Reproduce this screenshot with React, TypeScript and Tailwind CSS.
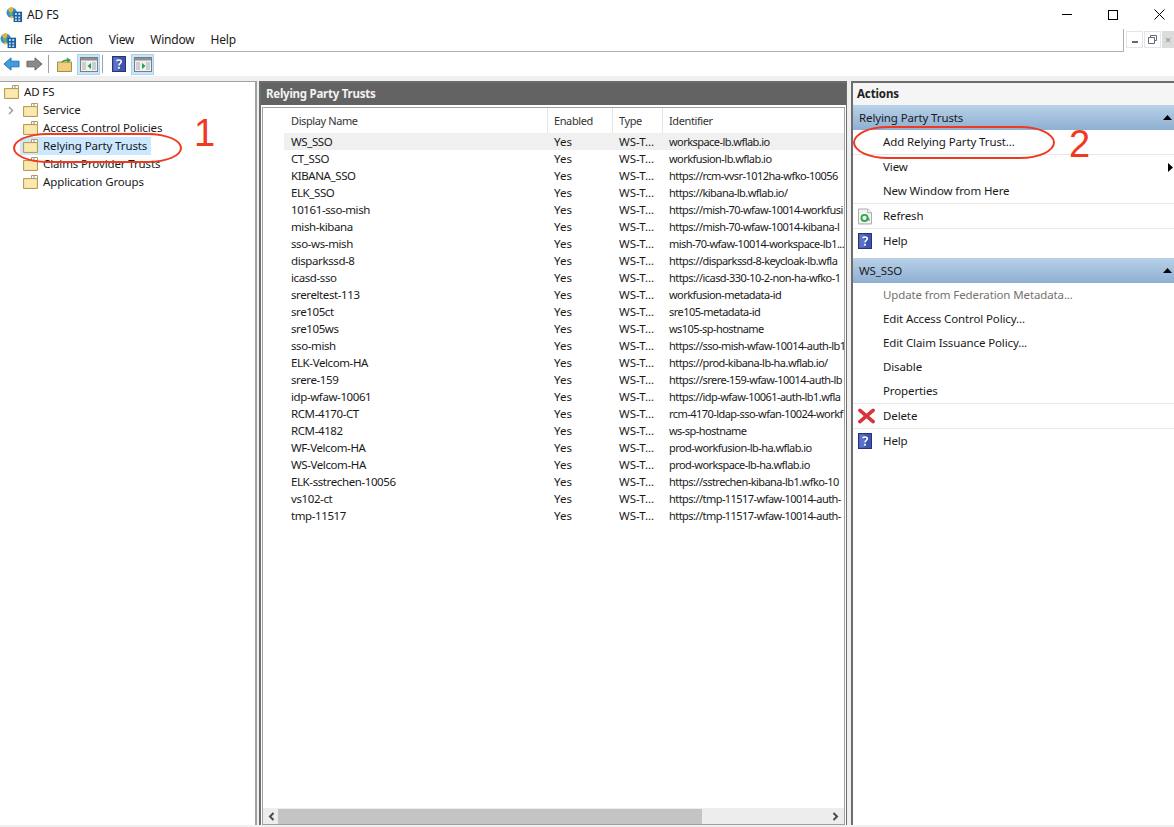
import type { ReactNode } from "react";

// identifiers are written as far as the column shows them
const rows = [
  ["WS_SSO", "workspace-lb.wflab.io"],
  ["CT_SSO", "workfusion-lb.wflab.io"],
  ["KIBANA_SSO", "https://rcm-vvsr-1012ha-wfko-10056"],
  ["ELK_SSO", "https://kibana-lb.wflab.io/"],
  ["10161-sso-mish", "https://mish-70-wfaw-10014-workfusi"],
  ["mish-kibana", "https://mish-70-wfaw-10014-kibana-l"],
  ["sso-ws-mish", "mish-70-wfaw-10014-workspace-lb1..."],
  ["disparkssd-8", "https://disparkssd-8-keycloak-lb.wfla"],
  ["icasd-sso", "https://icasd-330-10-2-non-ha-wfko-1"],
  ["srereltest-113", "workfusion-metadata-id"],
  ["sre105ct", "sre105-metadata-id"],
  ["sre105ws", "ws105-sp-hostname"],
  ["sso-mish", "https://sso-mish-wfaw-10014-auth-lb1"],
  ["ELK-Velcom-HA", "https://prod-kibana-lb-ha.wflab.io/"],
  ["srere-159", "https://srere-159-wfaw-10014-auth-lb"],
  ["idp-wfaw-10061", "https://idp-wfaw-10061-auth-lb1.wfla"],
  ["RCM-4170-CT", "rcm-4170-ldap-sso-wfan-10024-workf"],
  ["RCM-4182", "ws-sp-hostname"],
  ["WF-Velcom-HA", "prod-workfusion-lb-ha.wflab.io"],
  ["WS-Velcom-HA", "prod-workspace-lb-ha.wflab.io"],
  ["ELK-sstrechen-10056", "https://sstrechen-kibana-lb1.wfko-10"],
  ["vs102-ct", "https://tmp-11517-wfaw-10014-auth-"],
  ["tmp-11517", "https://tmp-11517-wfaw-10014-auth-"],
];

function Folder() {
  return (
    <svg width="15" height="14" viewBox="0 0 15 14" className="shrink-0">
      <path d="M.5 3.500h14v10H.5z" fill="#f3d887" stroke="#b79d5c" />
      <path d="M1.500 12.500V4.500h12v8z" fill="#f9e8b0" />
      <path d="M8.500 .500h6v3h-6z" fill="#fff" stroke="#b79d5c" />
      <path d="M10 1.500h2v1h-2z" fill="#5aa2d8" />
    </svg>
  );
}

function AppIcon() {
  return (
    <svg width="17" height="17" viewBox="0 0 18 18" className="shrink-0">
      <circle cx="6" cy="7" r="5.500" fill="#2f8fc9" />
      <path d="M2 4l3-3 3 1-1 4-3 1zM5 10l3 1-1 2H4z" fill="#e8b13c" />
      <path d="M3 7l3-1 1 3-3 1z" fill="#6fb54a" />
      <path d="M8 6h9v11H8z" fill="#1f5f9e" />
      <path d="M9.500 7.500h2v2h-2zM13 7.500h2v2h-2zM9.500 11h2v2h-2zM13 11h2v2h-2zM9.500 14h2v2h-2zM13 14h2v2h-2z" fill="#b9dcf3" />
    </svg>
  );
}

function HelpIcon() {
  return (
    <svg width="14" height="16" viewBox="0 0 14 16" className="shrink-0">
      <rect x="0.500" y="0.500" width="13" height="15" fill="#3f55ad" stroke="#27347c" />
      <rect x="1.500" y="1.500" width="5" height="13" fill="#5c74c8" />
      <path d="M4.700 5.200C5 3.600 9.300 3.300 9.300 5.600c0 1.800-2.300 1.800-2.300 3.900" fill="none" stroke="#fff" strokeWidth="1.600" />
      <rect x="6.100" y="10.800" width="1.800" height="1.900" fill="#fff" />
    </svg>
  );
}

function RefreshIcon() {
  return (
    <svg width="14" height="17" viewBox="0 0 15 17" className="shrink-0">
      <path d="M.5.500h10l4 4v12H.5z" fill="#f3f3f3" stroke="#a5a5a5" />
      <path d="M10.500.500v4h4" fill="#fff" stroke="#a5a5a5" />
      <circle cx="7" cy="10" r="3.300" fill="none" stroke="#2fa84a" strokeWidth="2" />
      <path d="M9 11l3.500 2.500L12 9.500z" fill="#2fa84a" />
    </svg>
  );
}

function DeleteIcon() {
  return (
    <svg width="17" height="16" viewBox="0 0 18 16" className="shrink-0">
      <path d="M2 2l14 12M16 2L2 14" stroke="#d8353a" strokeWidth="3.800" strokeLinecap="round" />
    </svg>
  );
}

function Arrow({ color, edge, flip }: { color: string; edge: string; flip?: boolean }) {
  return (
    <svg width="17" height="16" viewBox="0 0 18 16" className={flip ? "shrink-0 -scale-x-100" : "shrink-0"}>
      <path d="M1 8l7.500-6.500V5H17v6H8.500v3.500z" fill={color} stroke={edge} />
    </svg>
  );
}

function PaneIcon({ right }: { right?: boolean }) {
  return (
    <svg width="18" height="15" viewBox="0 0 18 15">
      <rect x="0.500" y="0.500" width="17" height="14" fill="#f1f1f1" stroke="#7d7d7d" />
      <rect x="1" y="1" width="16" height="2.500" fill="#8f8f8f" />
      <rect x="2" y="5" width="4" height="8" fill="#c8d0d6" />
      <rect x="12" y="5" width="4" height="8" fill="#c8d0d6" />
      {right ? <path d="M8 6l3.500 3L8 12z" fill="#27a04a" /> : <path d="M11 6L7.500 9l3.500 3z" fill="#27a04a" />}
    </svg>
  );
}

function TreeItem({ label, selected }: { label: string; selected?: boolean }) {
  return (
    <div className="flex h-[18px] items-center pl-[20px]">
      <div className={selected ? "flex h-[18px] items-center gap-[5px] bg-[#cce8ff] pl-[3px] pr-1" : "flex h-[18px] items-center gap-[5px] pl-[3px] pr-1"}>
        <Folder />
        <span>{label}</span>
      </div>
    </div>
  );
}

function SectionHead({ label }: { label: string }) {
  return (
    <div className="flex h-[25px] items-center justify-between bg-gradient-to-b from-[#b9d1e8] to-[#8eafd2] pl-[6px] pr-[2px]">
      <span>{label}</span>
      <svg width="9" height="5" viewBox="0 0 9 5"><path d="M0 5l4.500-5L9 5z" fill="#000" /></svg>
    </div>
  );
}

function ActionItem({ label, icon, muted, line, more }: { label: string; icon?: ReactNode; muted?: boolean; line?: boolean; more?: boolean }) {
  return (
    <div className={line ? "flex h-[25px] items-center border-b border-[#e8e8e8]" : "flex h-[24px] items-center"}>
      <div className="flex w-[30px] pl-[5px]">{icon}</div>
      <span className={muted ? "flex-1 text-[#77716c]" : "flex-1"}>{label}</span>
      {more && <svg width="5" height="9" viewBox="0 0 5 9" className="mr-[1px]"><path d="M0 0l5 4.500L0 9z" fill="#000" /></svg>}
    </div>
  );
}

function Chevron({ left }: { left?: boolean }) {
  return (
    <svg width="7" height="9" viewBox="0 0 7 9">
      <path d={left ? "M5.500 1L2 4.500 5.500 8" : "M1.500 1L5 4.500 1.500 8"} fill="none" stroke="#4a4a4a" strokeWidth="2" />
    </svg>
  );
}

export default function App() {
  return (
    <div className="relative flex h-[827px] flex-col overflow-hidden bg-[#f0f0f0] font-['Noto_Sans',sans-serif] text-[11.5px] leading-[16px] tracking-[-0.12px] text-[#1a1a1a]">
      {/* Title bar */}
      <div className="flex h-[29px] items-center justify-between bg-white pl-[6px]">
        <div className="flex items-center gap-[4px] text-[12px]">
          <AppIcon />
          <span>AD FS</span>
        </div>
        <div className="flex items-center gap-[30px] pr-[7px]">
          <div className="flex w-[16px] justify-center"><div className="h-[1px] w-[10px] bg-black" /></div>
          <div className="flex w-[16px] justify-center"><div className="h-[10px] w-[10px] border border-black" /></div>
          <div className="flex w-[16px] justify-center">
            <svg width="11" height="11" viewBox="0 0 11 11"><path d="M.5.500l10 10M10.500.500l-10 10" stroke="#000" /></svg>
          </div>
        </div>
      </div>

      {/* Menu bar */}
      <div className="flex h-[23px] bg-white">
        <div className="flex flex-1 items-center border-b border-[#a9b0b6]">
          <AppIcon />
          <div className="ml-[7px] flex gap-[16px] text-[12px] tracking-[-0.2px]">
            <span>File</span>
            <span>Action</span>
            <span>View</span>
            <span>Window</span>
            <span>Help</span>
          </div>
        </div>
        <div className="flex w-[51px] items-start gap-[1px] border-l border-[#a9b0b6] pl-[2px] pt-[2px]">
          <div className="flex h-[17px] w-[17px] items-end justify-center border border-[#e5e5e5] pb-[4px]"><div className="h-[2px] w-[6px] bg-[#5f6b78]" /></div>
          <div className="flex h-[17px] w-[17px] items-center justify-center border border-[#e5e5e5]">
            <svg width="9" height="9" viewBox="0 0 9 9"><path d="M2.500 2V.500h6v5H7M.500 2.500h6v6h-6z" fill="none" stroke="#5f6b78" /></svg>
          </div>
          <div className="flex h-[17px] flex-1 items-center justify-center bg-[#dcdcdc] text-[#8a97a5]">×</div>
        </div>
      </div>

      {/* Toolbar */}
      <div className="flex h-[24px] items-center bg-white pl-[3px]">
        <Arrow color="#3d9ee0" edge="#2c6fb0" />
        <div className="ml-[6px]"><Arrow color="#8a8a8a" edge="#666666" flip /></div>
        <div className="ml-[5px] h-[18px] w-[1px] bg-[#a0a0a0]" />
        <div className="ml-[8px]">
          <svg width="15" height="15" viewBox="0 0 15 15">
            <path d="M.5 5h14v9.500H.5z" fill="#efcf7f" stroke="#a98c4a" />
            <path d="M4 6c1-3 4-4 6-3.500L9.500.500 14 3l-3.500 3-.5-2C8 4 6 5 4 6z" fill="#3f9c3f" />
          </svg>
        </div>
        <div className="ml-[5px] flex h-[21px] w-[23px] items-center justify-center border border-[#a6d2f5] bg-[#cce4f7]"><PaneIcon /></div>
        <div className="ml-[2px] h-[18px] w-[1px] bg-[#a0a0a0]" />
        <div className="ml-[9px]"><HelpIcon /></div>
        <div className="ml-[5px] flex h-[21px] w-[23px] items-center justify-center border border-[#a6d2f5] bg-[#cce4f7]"><PaneIcon right /></div>
      </div>

      {/* Panels */}
      <div className="mt-[5px] flex flex-1 pb-[2px]">
        {/* Tree */}
        <div className="w-[257px] border-r-2 border-t border-[#a0a0a0] bg-white pt-[1px]">
          <div className="flex h-[18px] items-center gap-[5px] pl-[4px]">
            <Folder />
            <span>AD FS</span>
          </div>
          <div className="relative">
            <div className="absolute left-[8px] top-[5px]"><svg width="6" height="9" viewBox="0 0 6 9"><path d="M1 1l3.500 3.500L1 8" fill="none" stroke="#a0a0a0" strokeWidth="1.500" /></svg></div>
            <TreeItem label="Service" />
            <TreeItem label="Access Control Policies" />
            <TreeItem label="Relying Party Trusts" selected />
            <TreeItem label="Claims Provider Trusts" />
            <TreeItem label="Application Groups" />
          </div>
        </div>

        {/* Center */}
        <div className="ml-[2px] flex w-[588px] flex-col border-t-2 border-l-2 border-r border-[#6d6d6d] bg-white">
          <div className="flex h-[22px] items-center bg-[#636363] pl-[5px] font-bold tracking-[-0.25px] text-[#f2f2f2]">Relying Party Trusts</div>
          <div className="mx-[1px] mt-[2px] flex min-h-0 flex-1 flex-col border border-[#a0a0a0]">
            <div className="flex h-[25px] items-center pl-[21px] text-[11px] tracking-[-0.4px] text-[#333]">
              <div className="flex h-full w-[264px] items-center border-r border-[#e5e5e5] pl-[7px]">Display Name</div>
              <div className="flex h-full w-[65px] items-center border-r border-[#e5e5e5] pl-[6px]">Enabled</div>
              <div className="flex h-full w-[50px] items-center border-r border-[#e5e5e5] pl-[6px]">Type</div>
              <div className="flex h-full flex-1 items-center pl-[6px]">Identifier</div>
            </div>
            <div className="flex-1 pl-[21px]">
              {rows.map(([name, id], i) => (
                <div key={name} className={i === 0 ? "flex h-[17px] items-center bg-[#f0f0f0]" : "flex h-[17px] items-center"}>
                  <div className="w-[264px] pl-[7px] tracking-[-0.4px]">{name}</div>
                  <div className="w-[65px] pl-[6px] tracking-normal">Yes</div>
                  <div className="w-[50px] pl-[6px] tracking-normal">WS-T...</div>
                  <div className="min-w-0 flex-1 whitespace-nowrap pl-[6px] text-[11px] tracking-[-0.55px]">{id}</div>
                </div>
              ))}
            </div>
            <div className="flex h-[16px] items-center bg-[#ededed] px-[5px]">
              <Chevron left />
              <div className="ml-[3px] h-[15px] w-[424px] bg-[#c4c4c4]" />
              <div className="flex-1" />
              <Chevron />
            </div>
          </div>
        </div>

        {/* Actions */}
        <div className="ml-[4px] flex-1 border-t-2 border-l-2 border-[#6d6d6d] bg-white">
          <div className="flex h-[22px] items-center bg-[#f5f5f5] pl-[4px] font-bold text-[#222]">Actions</div>
          <SectionHead label="Relying Party Trusts" />
          <ActionItem label="Add Relying Party Trust..." line />
          <ActionItem label="View" more />
          <ActionItem label="New Window from Here" line />
          <ActionItem label="Refresh" icon={<RefreshIcon />} line />
          <ActionItem label="Help" icon={<HelpIcon />} />
          <div className="h-[5px]" />
          <SectionHead label="WS_SSO" />
          <ActionItem label="Update from Federation Metadata..." muted />
          <ActionItem label="Edit Access Control Policy..." />
          <ActionItem label="Edit Claim Issuance Policy..." />
          <ActionItem label="Disable" />
          <ActionItem label="Properties" line />
          <ActionItem label="Delete" icon={<DeleteIcon />} line />
          <ActionItem label="Help" icon={<HelpIcon />} />
        </div>
      </div>

      {/* Annotations */}
      <div className="absolute left-[13px] top-[133px] h-[30px] w-[169px] rounded-[36px/16px] border-2 border-[#f0391e]" />
      <div className="absolute left-[194px] top-[108px] font-['Liberation_Sans',sans-serif] text-[38px] leading-[50px] text-[#f0391e]">1</div>
      <div className="absolute left-[853px] top-[126px] h-[33px] w-[202px] rounded-[36px/17px] border-2 border-[#f0391e]" />
      <div className="absolute left-[1069px] top-[119px] font-['Liberation_Sans',sans-serif] text-[38px] leading-[50px] text-[#f0391e]">2</div>
    </div>
  );
}
